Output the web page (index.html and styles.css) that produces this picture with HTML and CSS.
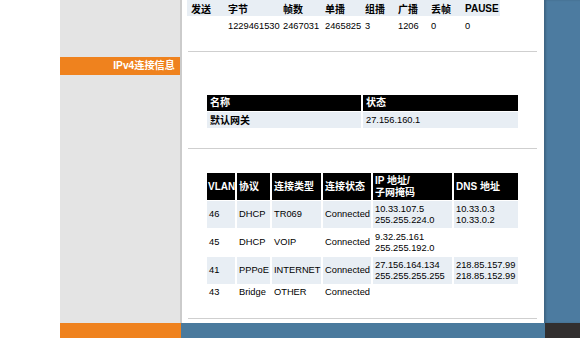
FILE: index.html
```html
<!DOCTYPE html>
<html lang="zh-CN">
<head>
  <meta charset="UTF-8">
  <title>IPv4连接信息</title>
  <link rel="stylesheet" href="styles.css">
</head>
<body>
  <div class="page">
    <div class="layout">
      <div class="gutter"></div>

      <nav class="sidebar">
        <a class="nav-item active">IPv4连接信息</a>
      </nav>

      <main class="content">
        <!-- port counters -->
        <table class="stats">
          <thead>
            <tr>
              <th class="c1">发送</th>
              <th class="c2">字节</th>
              <th class="c3">帧数</th>
              <th class="c4">单播</th>
              <th class="c5">组播</th>
              <th class="c6">广播</th>
              <th class="c7">丢帧</th>
              <th class="c8">PAUSE</th>
            </tr>
          </thead>
          <tbody>
            <tr>
              <td></td>
              <td>1229461530</td>
              <td>2467031</td>
              <td>2465825</td>
              <td>3</td>
              <td>1206</td>
              <td>0</td>
              <td>0</td>
            </tr>
          </tbody>
        </table>
        <hr class="rule rule-top">

        <!-- gateway -->
        <table class="grid gateway">
          <thead>
            <tr>
              <th class="g1">名称</th>
              <th class="g2">状态</th>
            </tr>
          </thead>
          <tbody>
            <tr class="odd">
              <td class="key">默认网关</td>
              <td>27.156.160.1</td>
            </tr>
          </tbody>
        </table>
        <hr class="rule rule-mid">

        <!-- wan connections -->
        <table class="grid vlan">
          <thead>
            <tr>
              <th class="v1">VLAN</th>
              <th class="v2">协议</th>
              <th class="v3">连接类型</th>
              <th class="v4">连接状态</th>
              <th class="v5">IP 地址/<br>子网掩码</th>
              <th class="v6">DNS 地址</th>
            </tr>
          </thead>
          <tbody>
            <tr class="odd">
              <td>46</td>
              <td>DHCP</td>
              <td>TR069</td>
              <td>Connected</td>
              <td>10.33.107.5<br>255.255.224.0</td>
              <td>10.33.0.3<br>10.33.0.2</td>
            </tr>
            <tr>
              <td>45</td>
              <td>DHCP</td>
              <td>VOIP</td>
              <td>Connected</td>
              <td>9.32.25.161<br>255.255.192.0</td>
              <td></td>
            </tr>
            <tr class="odd">
              <td>41</td>
              <td>PPPoE</td>
              <td>INTERNET</td>
              <td>Connected</td>
              <td>27.156.164.134<br>255.255.255.255</td>
              <td>218.85.157.99<br>218.85.152.99</td>
            </tr>
            <tr class="short">
              <td>43</td>
              <td>Bridge</td>
              <td>OTHER</td>
              <td>Connected</td>
              <td></td>
              <td></td>
            </tr>
          </tbody>
        </table>
        <hr class="rule rule-bottom">
      </main>

      <div class="rail"></div>
    </div>

    <footer class="footer">
      <div class="gutter"></div>
      <div class="foot-side"></div>
      <div class="foot-main"></div>
      <div class="foot-rail"></div>
    </footer>
  </div>
</body>
</html>
```

FILE: styles.css
```css
* {
  margin: 0;
  padding: 0;
  box-sizing: border-box;
}

body {
  font-family: "Liberation Sans", Arial, "Noto Sans CJK SC", sans-serif;
  font-size: 9.3px;
  color: #000;
  background: #fff;
}

.page {
  width: 580px;
  height: 338px;
  overflow: hidden;
  display: flex;
  flex-direction: column;
}

.layout {
  display: flex;
  height: 323px;
}

.gutter {
  width: 60px;
  flex: none;
}

/* left menu */
.sidebar {
  width: 122px;
  flex: none;
  background: #e4e4e4;
  border-right: 2px solid #cbcbcb;
  padding-top: 57px;
}

.nav-item {
  display: block;
  height: 18px;
  line-height: 18px;
  padding-right: 5px;
  font-size: 10.2px;
  font-weight: bold;
  color: #fff;
  text-align: right;
  text-decoration: none;
}

.nav-item.active {
  background: #ef821e;
}

/* main panel */
.content {
  width: 362px;
  flex: none;
  background: #fff;
}

.rail {
  flex: 1;
  background: #4c7ba0;
  box-shadow: inset 2px 0 2px rgba(0, 0, 0, 0.18);
}

.rule {
  border: 0;
  border-top: 1px solid #cfcfcf;
  margin: 0 7px 0 6px;
}

.rule-top {
  margin-top: 15px;
}

.rule-mid {
  margin-top: 19px;
}

.rule-bottom {
  margin-top: 17px;
}

table {
  table-layout: fixed;
}

th, td {
  text-align: left;
  white-space: nowrap;
  overflow: visible;
}

th {
  font-size: 10px;
}

/* counters table */
.stats {
  margin-left: 5px;
  width: 313px;
  border-collapse: collapse;
}

.stats th {
  height: 16px;
  padding: 0 4px;
  background: #e8eef4;
  font-weight: bold;
}

.stats td {
  height: 20px;
  padding: 0 4px;
}

.stats .c1 { width: 37px; }
.stats .c2 { width: 55px; }
.stats .c3 { width: 42px; }
.stats .c4 { width: 40px; }
.stats .c5 { width: 33px; }
.stats .c6 { width: 33px; }
.stats .c7 { width: 34px; }
.stats .c8 { width: 39px; }

/* black-header tables */
.grid {
  margin-left: 23px;
  border-collapse: separate;
  border-spacing: 2px 1px;
}

.grid th {
  background: #000;
  color: #fff;
  font-weight: bold;
  padding: 0 2px;
  line-height: 12px;
}

.grid td {
  padding: 0 2px;
  line-height: 11px;
}

.grid .odd td {
  background: #e8eef4;
}

.grid .key {
  font-weight: bold;
  font-size: 10px;
}

.gateway {
  width: 315px;
  margin-top: 42px;
}

.gateway th,
.gateway td {
  height: 16px;
  padding: 0 3px;
}

.gateway .g1 { width: 154px; }
.gateway .g2 { width: 155px; }

.vlan {
  width: 315px;
  margin-top: 23px;
}

.vlan th,
.vlan td {
  height: 27px;
}

.vlan .short td {
  height: 15px;
}

.vlan .v1 { width: 28px; padding: 0 1px; }
.vlan .v2 { width: 33px; }
.vlan .v3 { width: 49px; }
.vlan .v4 { width: 48px; }
.vlan .v5 { width: 79px; }
.vlan .v6 { width: 64px; }

/* bottom bar */
.footer {
  display: flex;
  height: 15px;
}

.foot-side {
  width: 121px;
  flex: none;
  background: #ef821e;
}

.foot-main {
  width: 364px;
  flex: none;
  background: #4a7a9d;
}

.foot-rail {
  flex: 1;
  background: #322f2f;
}
```
